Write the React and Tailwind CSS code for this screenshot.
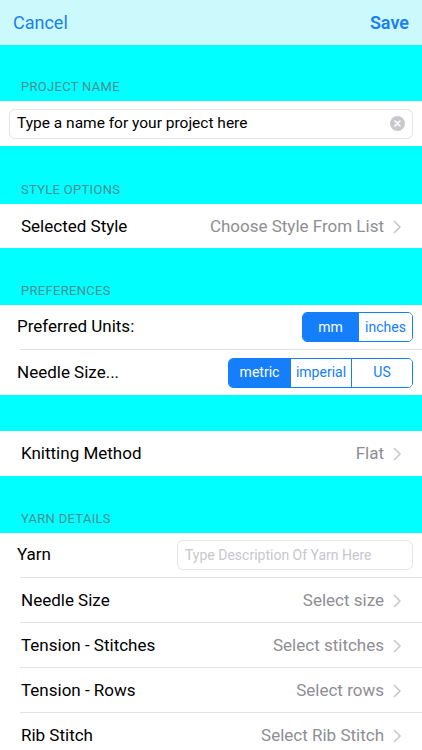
import React from 'react';

const Chevron = () => (
    <svg width="9" height="14" viewBox="0 0 9 14" className="ml-[9px] shrink-0">
        <path d="M1.5 1.5 L7 7 L1.5 12.5" fill="none" stroke="#c7c7cc" strokeWidth="1.6" strokeLinecap="round" strokeLinejoin="round" />
    </svg>
);

const SectionHeader = ({ title, h = 'h-[57px]' }) => (
    <div className={`bg-[#00ffff] flex items-end px-[21px] pb-[5px] ${h}`}>
        <span className="text-[13px] text-[#4a8f91] tracking-[0.3px] uppercase">{title}</span>
    </div>
);

const Separator = () => <div className="h-px bg-[#e2e2e6] ml-[20px]" />;

const DetailRow = ({ label, value, h = 'h-[44px]' }) => (
    <div className={`${h} flex items-center pl-[21px] pr-[20px] pt-px bg-white`}>
        <span className="text-[17px] text-black flex-1">{label}</span>
        <span className="text-[17px] text-[#8e8e93]">{value}</span>
        <Chevron />
    </div>
);

const Segmented = ({ options, widths, active }) => (
    <div className="flex border border-[#147efb] rounded-[5px] overflow-hidden h-[30px]">
        {options.map((opt, i) => (
            <div
                key={opt}
                style={{ width: widths[i] }}
                className={`flex items-center justify-center text-[14px] ${i > 0 ? 'border-l border-[#147efb]' : ''} ${i === active ? 'bg-[#147efb] text-white' : 'bg-white text-[#147efb]'}`}
            >
                {opt}
            </div>
        ))}
    </div>
);

export default function App() {
    return (
        <div className="w-[422px] h-[750px] overflow-hidden bg-[#00ffff] font-['Roboto',sans-serif]">
            {/* nav bar */}
            <div className="h-[45px] bg-[#ccfafc] flex items-center justify-between px-[13px]">
                <span className="text-[18px] text-[#1a7ff0]">Cancel</span>
                <span className="text-[18px] font-semibold text-[#1a7ff0]">Save</span>
            </div>

            <SectionHeader title="Project Name" h="h-[56px]" />
            <div className="h-[45px] bg-white flex items-center px-[9px]">
                <div className="flex-1 h-[30px] border border-[#e5e5ea] rounded-[6px] flex items-center pl-[7px] pr-[7px]">
                    <span className="flex-1 text-[15.5px] text-black">Type a name for your project here</span>
                    <div className="w-[15px] h-[15px] rounded-full bg-[#c7c7cc] flex items-center justify-center">
                        <svg width="7" height="7" viewBox="0 0 7 7">
                            <path d="M1 1 L6 6 M6 1 L1 6" stroke="white" strokeWidth="1.6" strokeLinecap="round" />
                        </svg>
                    </div>
                </div>
            </div>

            <SectionHeader title="Style Options" h="h-[58px]" />
            <DetailRow label="Selected Style" value="Choose Style From List" />

            <SectionHeader title="Preferences" />
            <div className="bg-white">
                <div className="h-[44px] flex items-center justify-between pl-[17px] pr-[9px]">
                    <span className="text-[17px] text-black">Preferred Units:</span>
                    <Segmented options={['mm', 'inches']} widths={[55, 54]} active={0} />
                </div>
                <Separator />
                <div className="h-[45px] flex items-center justify-between pl-[17px] pr-[9px]">
                    <span className="text-[17px] text-black">Needle Size...</span>
                    <Segmented options={['metric', 'imperial', 'US']} widths={[61, 61, 61]} active={0} />
                </div>
            </div>

            <div className="h-[36px]" />
            <DetailRow label="Knitting Method" value="Flat" h="h-[45px]" />

            <SectionHeader title="Yarn Details" />
            <div className="bg-white">
                <div className="h-[44px] flex items-center justify-between pl-[17px] pr-[9px]">
                    <span className="text-[17px] text-black">Yarn</span>
                    <div className="w-[236px] h-[30px] border border-[#e5e5ea] rounded-[6px] flex items-center px-[7px]">
                        <span className="text-[14px] text-[#c7c7cd]">Type Description Of Yarn Here</span>
                    </div>
                </div>
                <Separator />
                <DetailRow label="Needle Size" value="Select size" />
                <Separator />
                <DetailRow label="Tension - Stitches" value="Select stitches" />
                <Separator />
                <DetailRow label="Tension - Rows" value="Select rows" />
                <Separator />
                <DetailRow label="Rib Stitch" value="Select Rib Stitch" />
            </div>
        </div>
    );
}
